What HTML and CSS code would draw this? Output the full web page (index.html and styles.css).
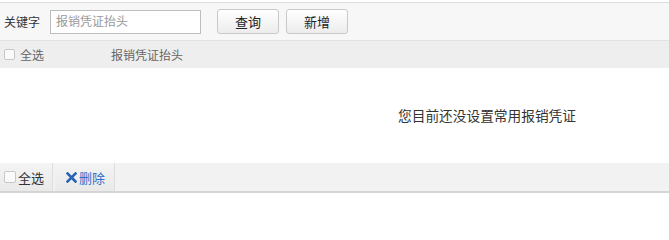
FILE: index.html
```html
<!DOCTYPE html>
<html lang="zh-CN">

<head>
    <meta charset="UTF-8">
    <title>常用报销凭证</title>
    <link rel="stylesheet" href="styles.css">
</head>

<body>
    <div class="toolbar">
        <label class="kw-label">关键字</label>
        <input class="kw-input" type="text" placeholder="报销凭证抬头">
        <button class="btn btn-query">查询</button>
        <button class="btn">新增</button>
    </div>

    <div class="list-head">
        <label class="check-all"><span class="box"></span>全选</label>
        <span class="col-title">报销凭证抬头</span>
    </div>

    <div class="empty">
        <p>您目前还没设置常用报销凭证</p>
    </div>

    <div class="footbar">
        <label class="foot-item check-all"><span class="box"></span>全选</label>
        <a class="foot-item del" href="#">
            <svg class="x" width="11" height="11" viewBox="0 0 11 11">
                <path d="M1.5 1.5 L9.5 9.5 M9.5 1.5 L1.5 9.5" stroke="#2a62b4" stroke-width="2.6" stroke-linecap="square" />
            </svg>删除</a>
    </div>
</body>

</html>
```

FILE: styles.css
```css
body {
    margin: 0;
    font-family: "Liberation Sans", "Noto Sans CJK SC", sans-serif;
    font-size: 12px;
    color: #333;
    background-color: #fff;
}

.toolbar {
    margin-top: 2px;
    height: 37px;
    border-top: 1px solid #dcdcdc;
    border-bottom: 1px solid #e2e2e2;
    background-color: #f7f7f7;
    display: flex;
    align-items: center;
    padding-left: 4px;
}

.kw-label {
    font-size: 12px;
    color: #333;
    margin-right: 10px;
}

.kw-input {
    box-sizing: border-box;
    width: 151px;
    height: 24px;
    border: 1px solid #bdbdbd;
    padding: 0 5px;
    font-family: inherit;
    font-size: 12px;
    color: #333;
    background-color: #fff;
    margin-right: 16px;
}

.kw-input::placeholder {
    color: #999;
}

.btn {
    box-sizing: border-box;
    width: 62px;
    height: 25px;
    border: 1px solid #c9c9c9;
    border-radius: 3px;
    background: linear-gradient(#ffffff, #ececec);
    font-family: inherit;
    font-size: 13px;
    color: #222;
    cursor: pointer;
    margin-right: 7px;
    padding: 0;
}

.btn:hover {
    background: linear-gradient(#ffffff, #e0e0e0);
}

.list-head {
    height: 27px;
    background-color: #eeeeee;
    display: flex;
    align-items: center;
    padding-left: 4px;
    color: #666;
}

.check-all {
    display: flex;
    align-items: center;
}

.box {
    display: inline-block;
    box-sizing: border-box;
    width: 11px;
    height: 11px;
    border: 1px solid #c8c8c8;
    border-radius: 2px;
    background-color: #fafafa;
    margin-right: 5px;
}

.col-title {
    margin-left: 67px;
}

.empty {
    height: 95px;
    display: flex;
    align-items: center;
    padding-left: 398px;
}

.empty p {
    margin: 0 0 2px;
    font-size: 13.7px;
    color: #333;
}

.footbar {
    height: 28px;
    background-color: #f2f2f2;
    border-bottom: 2px solid #d4d4d4;
    display: flex;
}

.foot-item {
    display: flex;
    align-items: center;
    padding: 0 8px 0 4px;
    border-right: 1px solid #dedede;
    background: linear-gradient(#f4f4f4, #e9e9e9);
    margin-right: 2px;
    font-size: 13px;
    color: #333;
}

.foot-item .box {
    width: 12px;
    height: 12px;
    margin-right: 2px;
}

.del {
    color: #2a70c8;
    text-decoration: none;
    padding: 0 9px 0 11px;
}

.del .x {
    margin-right: 2px;
}
```
